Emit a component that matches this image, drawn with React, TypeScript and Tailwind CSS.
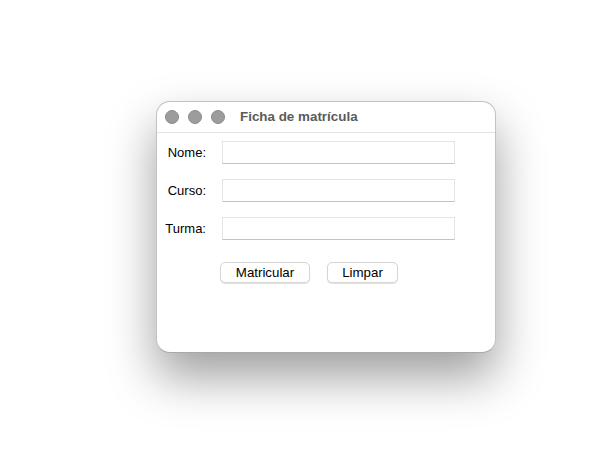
export default function App() {
  const fields = ['Nome:', 'Curso:', 'Turma:'];

  return (
    <div className="min-h-screen bg-white pl-[156px] pt-[101px]" style={{ fontFamily: '"Liberation Sans", Arial, sans-serif' }}>
      <div className="w-[340px] h-[252px] rounded-[14px] bg-white border border-[#c2c2c2] border-b-[#a8a8a8] shadow-[0_24px_48px_rgba(0,0,0,0.38)] overflow-hidden">
        {/* title bar */}
        <div className="h-[31px] flex items-center border-b border-[#e3e3e3] pl-[8px]">
          <div className="flex gap-[9px]">
            <span className="w-[14px] h-[14px] rounded-full bg-[#9c9c9c] border border-[#8a8a8a]" />
            <span className="w-[14px] h-[14px] rounded-full bg-[#9c9c9c] border border-[#8a8a8a]" />
            <span className="w-[14px] h-[14px] rounded-full bg-[#9c9c9c] border border-[#8a8a8a]" />
          </div>
          <span className="ml-[15px] text-[13.4px] font-bold text-[#5b5b5b]">Ficha de matrícula</span>
        </div>

        {/* form */}
        <div className="pt-[8px] grid grid-cols-[49px_233px] gap-x-[16px] gap-y-[15px] items-center">
          {fields.map((f) => (
            <div key={f} className="contents">
              <span className="text-right text-[13px] text-black">{f}</span>
              <input className="h-[23px] bg-white border border-[#e4e4e4] border-b-[#c4c4c4] outline-none" />
            </div>
          ))}
        </div>

        <div className="flex gap-[17px] pl-[63px] mt-[22px]">
          <button className="w-[90px] h-[21px] rounded-[5px] bg-white border border-[#d6d6d6] shadow-[0_1px_1px_rgba(0,0,0,0.12)] text-[13.3px] text-black leading-none">
            Matricular
          </button>
          <button className="w-[71px] h-[21px] rounded-[5px] bg-white border border-[#d6d6d6] shadow-[0_1px_1px_rgba(0,0,0,0.12)] text-[13.3px] text-black leading-none">
            Limpar
          </button>
        </div>
      </div>
    </div>
  );
}
